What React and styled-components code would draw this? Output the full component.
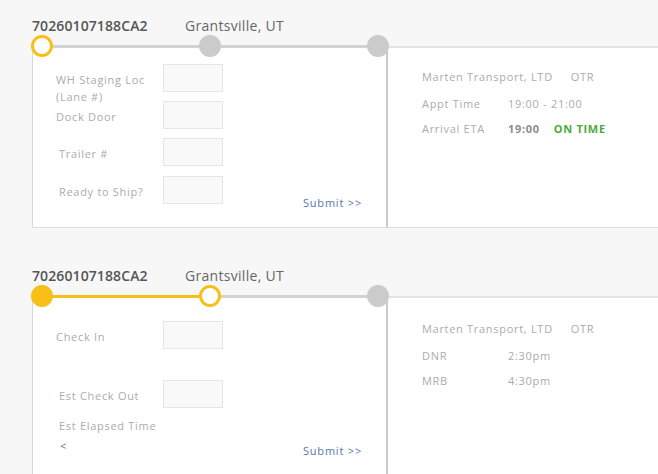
import React from 'react';
import styled, { createGlobalStyle } from 'styled-components';

const GlobalStyle = createGlobalStyle`
  body {
    margin: 0;
    background: #f7f7f7;
    font-family: 'Open Sans', 'Liberation Sans', sans-serif;
    overflow: hidden;
  }
`;

const YELLOW = '#f8bf17';
const GRAY = '#cbcbcb';

const Page = styled.div`
  padding: 16px 0 0 32px;
  display: flex;
  flex-direction: column;
  gap: 38px;
`;

const Card = styled.div`
  display: flex;
  flex-direction: column;
`;

const TitleRow = styled.div`
  display: flex;
  line-height: 19px;
  font-size: 14px;
`;

const OrderNo = styled.div`
  width: 153px;
  font-weight: 600;
  color: #555;
  letter-spacing: 0.1px;
`;

const City = styled.div`
  color: #666;
  letter-spacing: 0.3px;
`;

const Timeline = styled.div`
  display: flex;
  align-items: center;
  width: 358px;
  height: 22px;
  margin-left: -1px;
  position: relative;
  z-index: 1;
`;

const Dot = styled.div`
  width: 22px;
  height: 22px;
  flex: none;
  box-sizing: border-box;
  border-radius: 50%;
  background: ${p => (p.$state === 'done' ? YELLOW : p.$state === 'current' ? '#fff' : GRAY)};
  border: ${p => (p.$state === 'current' ? `3px solid ${YELLOW}` : 'none')};
`;

const Segment = styled.div`
  flex: 1;
  height: 3px;
  background: ${p => (p.$done ? YELLOW : '#d2d2d2')};
`;

const Body = styled.div`
  display: flex;
  margin-top: -11px;
`;

const FormBox = styled.div`
  width: 356px;
  box-sizing: border-box;
  background: #fff;
  border-left: 1px solid #d8d8d8;
  border-right: 2px solid #cacaca;
  border-bottom: 1px solid #dcdcdc;
  padding: ${p => p.$top}px 24px 23px 23px;
  min-height: ${p => p.$minHeight || 0}px;
  display: flex;
  flex-direction: column;
`;

const Row = styled.div`
  display: flex;
  align-items: flex-start;
  height: ${p => (p.$auto ? 'auto' : '28px')};
  margin-top: ${p => p.$gap || 0}px;
`;

const Label = styled.div`
  width: 107px;
  flex: none;
  box-sizing: border-box;
  padding-left: ${p => p.$indent || 0}px;
  padding-right: 4px;
  margin-top: ${p => (p.$flush ? 0 : 7)}px;
  font-size: 11px;
  line-height: 17px;
  letter-spacing: 0.7px;
  color: #ababab;
`;

const Field = styled.div`
  width: 60px;
  height: 28px;
  flex: none;
  box-sizing: border-box;
  background: #f9f9f9;
  border: 1px solid #e6e6e6;
`;

const LinkText = styled.a`
  font-size: 11px;
  line-height: 17px;
  letter-spacing: 0.8px;
  color: #5676b0;
  cursor: pointer;
  text-decoration: none;
`;

const Submit = styled(LinkText)`
  margin-left: auto;
  align-self: ${p => (p.$inRow ? 'flex-end' : 'flex-start')};
  margin-bottom: ${p => (p.$inRow ? -7 : 0)}px;
  margin-top: ${p => p.$top || 0}px;
`;

const Back = styled(LinkText)`
  padding-left: 4px;
`;

const InfoPanel = styled.div`
  flex: 1;
  background: #fff;
  border-top: 2px solid #e3e3e3;
  border-bottom: 1px solid #dcdcdc;
  padding: ${p => p.$top}px 0 0 34px;
  font-size: 11px;
  line-height: 17px;
  letter-spacing: 0.7px;
  color: #ababab;
`;

const InfoHead = styled.div`
  display: flex;
  gap: 18px;
  margin-bottom: 10px;
`;

const InfoRow = styled.div`
  display: flex;
  margin-bottom: 8px;
`;

const InfoKey = styled.div`
  width: 86px;
`;

const Strong = styled.span`
  font-weight: 700;
  color: ${p => p.$color || '#8c8c8c'};
  margin-right: 14px;
`;

const Header = ({ steps }) => (
  <>
    <TitleRow>
      <OrderNo>70260107188CA2</OrderNo>
      <City>Grantsville, UT</City>
    </TitleRow>
    <Timeline>
      <Dot $state={steps[0]} />
      <Segment $done={steps[1] !== 'pending'} />
      <Dot $state={steps[1]} />
      <Segment $done={steps[2] !== 'pending'} />
      <Dot $state={steps[2]} />
    </Timeline>
  </>
);

export default function App() {
  return (
    <Page>
      <GlobalStyle />
      <Card>
        <Header steps={['current', 'pending', 'pending']} />
        <Body>
          <FormBox $top={18}>
            <Row>
              <Label>WH Staging Loc (Lane #)</Label>
              <Field />
            </Row>
            <Row $gap={9}>
              <Label>Dock Door</Label>
              <Field />
            </Row>
            <Row $gap={9}>
              <Label $indent={3}>Trailer #</Label>
              <Field />
            </Row>
            <Row $gap={10}>
              <Label $indent={3}>Ready to Ship?</Label>
              <Field />
              <Submit $inRow>Submit &gt;&gt;</Submit>
            </Row>
          </FormBox>
          <InfoPanel $top={20}>
            <InfoHead>
              <span>Marten Transport, LTD</span>
              <span>OTR</span>
            </InfoHead>
            <InfoRow>
              <InfoKey>Appt Time</InfoKey>
              <span>19:00 - 21:00</span>
            </InfoRow>
            <InfoRow>
              <InfoKey>Arrival ETA</InfoKey>
              <Strong>19:00</Strong>
              <Strong $color="#4aaa3c">ON TIME</Strong>
            </InfoRow>
          </InfoPanel>
        </Body>
      </Card>

      <Card>
        <Header steps={['done', 'current', 'pending']} />
        <Body>
          <FormBox $top={25} $minHeight={200}>
            <Row>
              <Label>Check In</Label>
              <Field />
            </Row>
            <Row $gap={31}>
              <Label $indent={3}>Est Check Out</Label>
              <Field />
            </Row>
            <Row $gap={2} $auto>
              <Label $indent={3}>Est Elapsed Time</Label>
            </Row>
            <Row $gap={3} $auto>
              <Back>&lt;</Back>
              <Submit $top={5}>Submit &gt;&gt;</Submit>
            </Row>
          </FormBox>
          <InfoPanel $top={22}>
            <InfoHead>
              <span>Marten Transport, LTD</span>
              <span>OTR</span>
            </InfoHead>
            <InfoRow>
              <InfoKey>DNR</InfoKey>
              <span>2:30pm</span>
            </InfoRow>
            <InfoRow>
              <InfoKey>MRB</InfoKey>
              <span>4:30pm</span>
            </InfoRow>
          </InfoPanel>
        </Body>
      </Card>
    </Page>
  );
}
